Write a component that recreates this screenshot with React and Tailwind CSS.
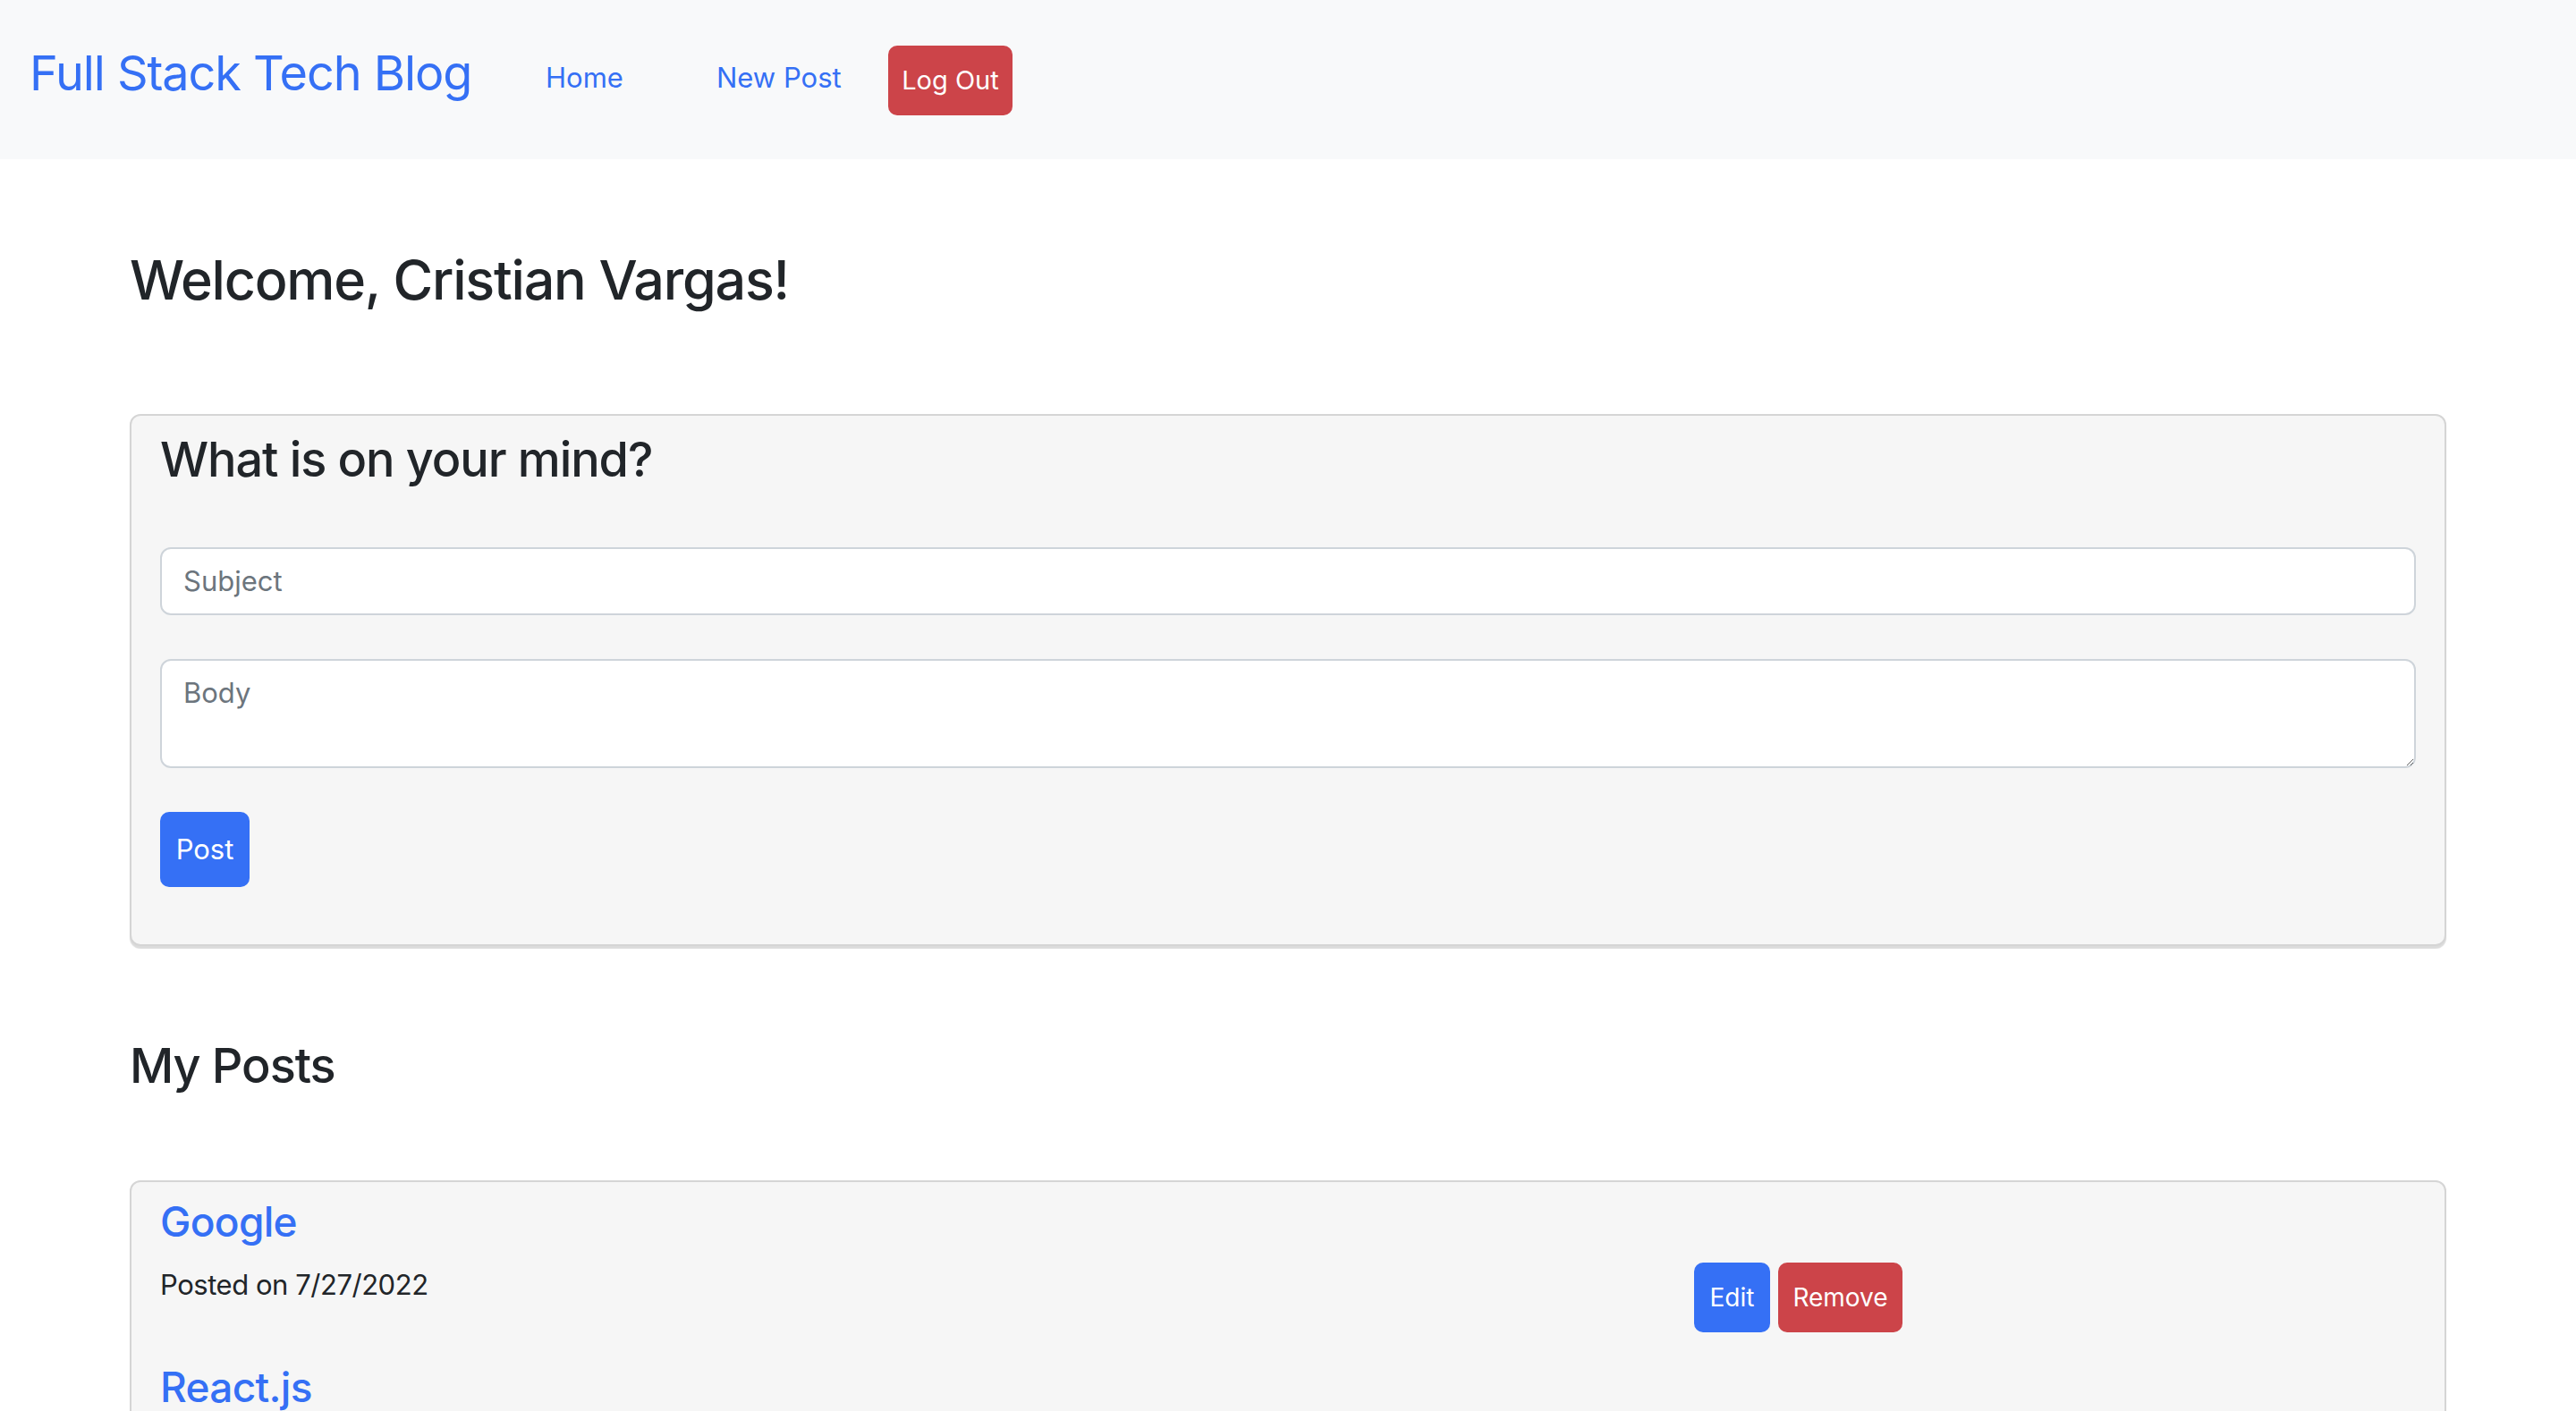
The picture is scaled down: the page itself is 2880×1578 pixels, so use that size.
import React from "react";

function PostItem({ title, date }) {
  return (
    <div>
      <h4 className="text-[46px] leading-[1.2] font-medium text-[#3570f5] tracking-[-0.015em]">{title}</h4>
      <div className="mt-[19px] flex items-start pb-[34px]">
        <p className="w-[1715px] shrink-0 text-[31px] leading-[48px] text-[#212529] tracking-[-0.015em]">Posted on {date}</p>
        <div className="-mt-[1px] flex gap-[9px]">
          <button className="w-[85px] h-[78px] rounded-[10px] bg-[#3570f5] text-white text-[28px] flex items-center justify-center">Edit</button>
          <button className="w-[139px] h-[78px] rounded-[10px] bg-[#cc4449] text-white text-[28px] flex items-center justify-center">Remove</button>
        </div>
      </div>
    </div>
  );
}

export default function App() {
  return (
    <div className="min-h-screen bg-white font-['Inter',sans-serif] text-[#212529]">
      <nav className="h-[178px] bg-[#f8f9fa] flex items-start pl-[33px]">
        <div className="w-[577px] shrink-0 mt-[50px] text-[54px] leading-[1.2] text-[#3570f5] tracking-[-0.02em]">Full Stack Tech Blog</div>
        <a className="w-[191px] shrink-0 mt-[63px] text-[31px] leading-[48px] text-[#3570f5]">Home</a>
        <a className="w-[192px] shrink-0 mt-[63px] text-[31px] leading-[48px] text-[#3570f5]">New Post</a>
        <button className="mt-[51px] w-[139px] h-[78px] rounded-[10px] bg-[#cc4449] text-white text-[29px] flex items-center justify-center">Log Out</button>
      </nav>

      <main className="px-[145px]">
        <h2 className="pt-[99px] text-[61px] leading-[1.2] font-medium tracking-[-0.02em]">Welcome, Cristian Vargas!</h2>

        <section className="mt-[113px] h-[595px] rounded-[12px] border-2 border-[#d5d5d5] bg-[#f6f6f6] shadow-[0_3px_1px_rgba(0,0,0,0.14)] px-[32px] pt-[17px]">
          <h3 className="text-[54px] leading-[1.2] font-medium tracking-[-0.02em]">What is on your mind?</h3>
          <input
            placeholder="Subject"
            className="mt-[65px] block w-full h-[76px] rounded-[12px] border-2 border-[#ced4da] bg-white px-[24px] text-[31px] text-[#212529] placeholder:text-[#6c757d] outline-none"
          />
          <textarea
            placeholder="Body"
            className="mt-[49px] block w-full h-[122px] rounded-[12px] border-2 border-[#ced4da] bg-white px-[24px] py-[12px] text-[31px] leading-[48px] text-[#212529] placeholder:text-[#6c757d] outline-none"
          />
          <button className="mt-[49px] w-[100px] h-[84px] rounded-[10px] bg-[#3570f5] text-white text-[31px] flex items-center justify-center">Post</button>
        </section>

        <h3 className="mt-[102px] text-[54px] leading-[1.2] font-medium tracking-[-0.02em]">My Posts</h3>

        <section className="mt-[95px] rounded-[12px] border-2 border-[#d5d5d5] bg-[#f6f6f6] px-[32px] pt-[17px]">
          <PostItem title="Google" date="7/27/2022" />
          <PostItem title="React.js" date="7/27/2022" />
        </section>
      </main>
    </div>
  );
}
